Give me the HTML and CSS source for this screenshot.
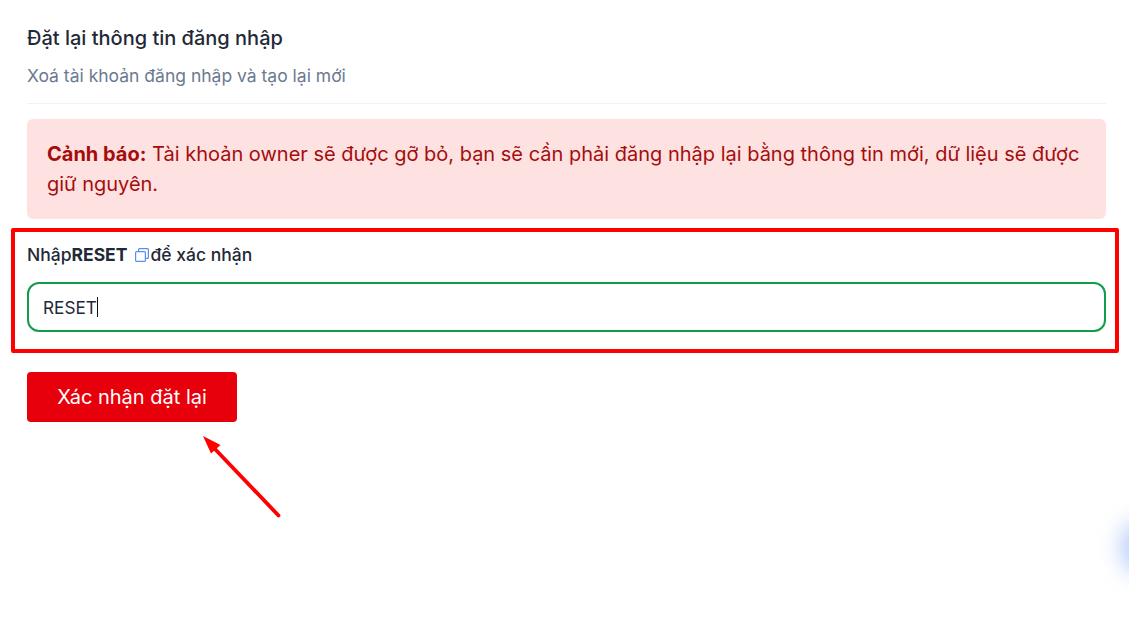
FILE: index.html
```html
<!DOCTYPE html>
<html lang="en">
<head>
    <meta charset="UTF-8">
    <title>Đặt lại thông tin đăng nhập</title>
    <link rel="stylesheet" href="styles.css">
</head>
<body>
    <div class="page">
        <div class="section-head">
            <h3>Đặt lại thông tin đăng nhập</h3>
            <p>Xoá tài khoản đăng nhập và tạo lại mới</p>
        </div>

        <div class="alert">
            <strong>Cảnh báo:</strong> Tài khoản owner sẽ được gỡ bỏ, bạn sẽ cần phải đăng nhập lại bằng thông tin mới, dữ liệu sẽ được giữ nguyên.
        </div>

        <div class="field">
            <div class="field-label">
                <span>Nhập</span><b>RESET</b>
                <svg class="copy-icon" width="16" height="16" viewBox="0 0 16 16" fill="none" stroke="#5b8def" stroke-width="1.2">
                    <rect x="1.600" y="4.600" width="9.800" height="9.800" rx="1"></rect>
                    <path d="M4.600 4.600V2.600a1 1 0 0 1 1-1h7.800a1 1 0 0 1 1 1v7.800a1 1 0 0 1-1 1h-2"></path>
                </svg>
                <span>để xác nhận</span>
            </div>
            <div class="input-box">RESET<i class="caret"></i></div>
        </div>

        <button class="btn-danger" type="button">Xác nhận đặt lại</button>
    </div>

    <!-- annotations on top of the screenshot -->
    <div class="mark-box"></div>
    <svg class="mark-arrow" width="100" height="100" viewBox="0 0 100 100" fill="#ff0000" stroke="none">
        <path d="M76.500 80.500L12 13" stroke="#ff0000" stroke-width="3.800" stroke-linecap="round"></path>
        <path d="M1 1L18.500 10L9 18.500Z"></path>
    </svg>
    <div class="glow"></div>
</body>
</html>
```

FILE: styles.css
```css
/* General Styles */
html, body {
    height: 100%;
}

body {
    margin: 0;
    background-color: #fff;
    color: #1f2937;
    font-family: 'Inter', 'Liberation Sans', sans-serif;
    overflow: hidden;
    position: relative;
}

.page {
    padding: 24px 23px 0 27px;
}

/* Header */
.section-head {
    padding-bottom: 15px;
    border-bottom: 1px solid #f1f2f4;
}

.section-head h3 {
    margin: 0;
    font-size: 20px;
    line-height: 28px;
    font-weight: 500;
    color: #1f2937;
}

.section-head p {
    margin: 12px 0 0;
    font-size: 17.5px;
    line-height: 24px;
    color: #6b7a90;
}

/* Alert */
.alert {
    margin-top: 15px;
    padding: 20px;
    border-radius: 6px;
    background-color: #fee2e2;
    color: #a50d0d;
    font-size: 20px;
    line-height: 30px;
}

/* Confirm field */
.field {
    margin-top: 24px;
}

.field-label {
    display: flex;
    align-items: center;
    font-size: 17.5px;
    line-height: 24px;
    font-weight: 500;
    color: #1f2937;
}

.field-label b {
    font-weight: 700;
}

.copy-icon {
    margin: 0 0 0 7px;
}

.input-box {
    margin-top: 15px;
    height: 50px;
    box-sizing: border-box;
    padding-left: 14px;
    border: 2px solid #119c4a;
    border-radius: 12px;
    display: flex;
    align-items: center;
    font-size: 17.2px;
    color: #1f2937;
}

.caret {
    width: 1px;
    height: 20px;
    background-color: #111;
}

/* Button */
.btn-danger {
    display: block;
    margin-top: 40px;
    width: 210px;
    height: 50px;
    border: none;
    border-radius: 4px;
    background-color: #e7000b;
    color: #fff;
    font-family: inherit;
    font-size: 20px;
    font-weight: 400;
}

/* Annotations */
.mark-box {
    position: absolute;
    left: 11px;
    top: 228px;
    width: 1108px;
    height: 125px;
    box-sizing: border-box;
    border: 4px solid #ff0000;
    border-radius: 2px;
}

.mark-arrow {
    position: absolute;
    left: 202px;
    top: 435px;
}

.glow {
    position: absolute;
    right: -30px;
    top: 522px;
    width: 36px;
    height: 50px;
    border-radius: 50%;
    background-color: #a9c4f7;
    filter: blur(12px);
}
```
